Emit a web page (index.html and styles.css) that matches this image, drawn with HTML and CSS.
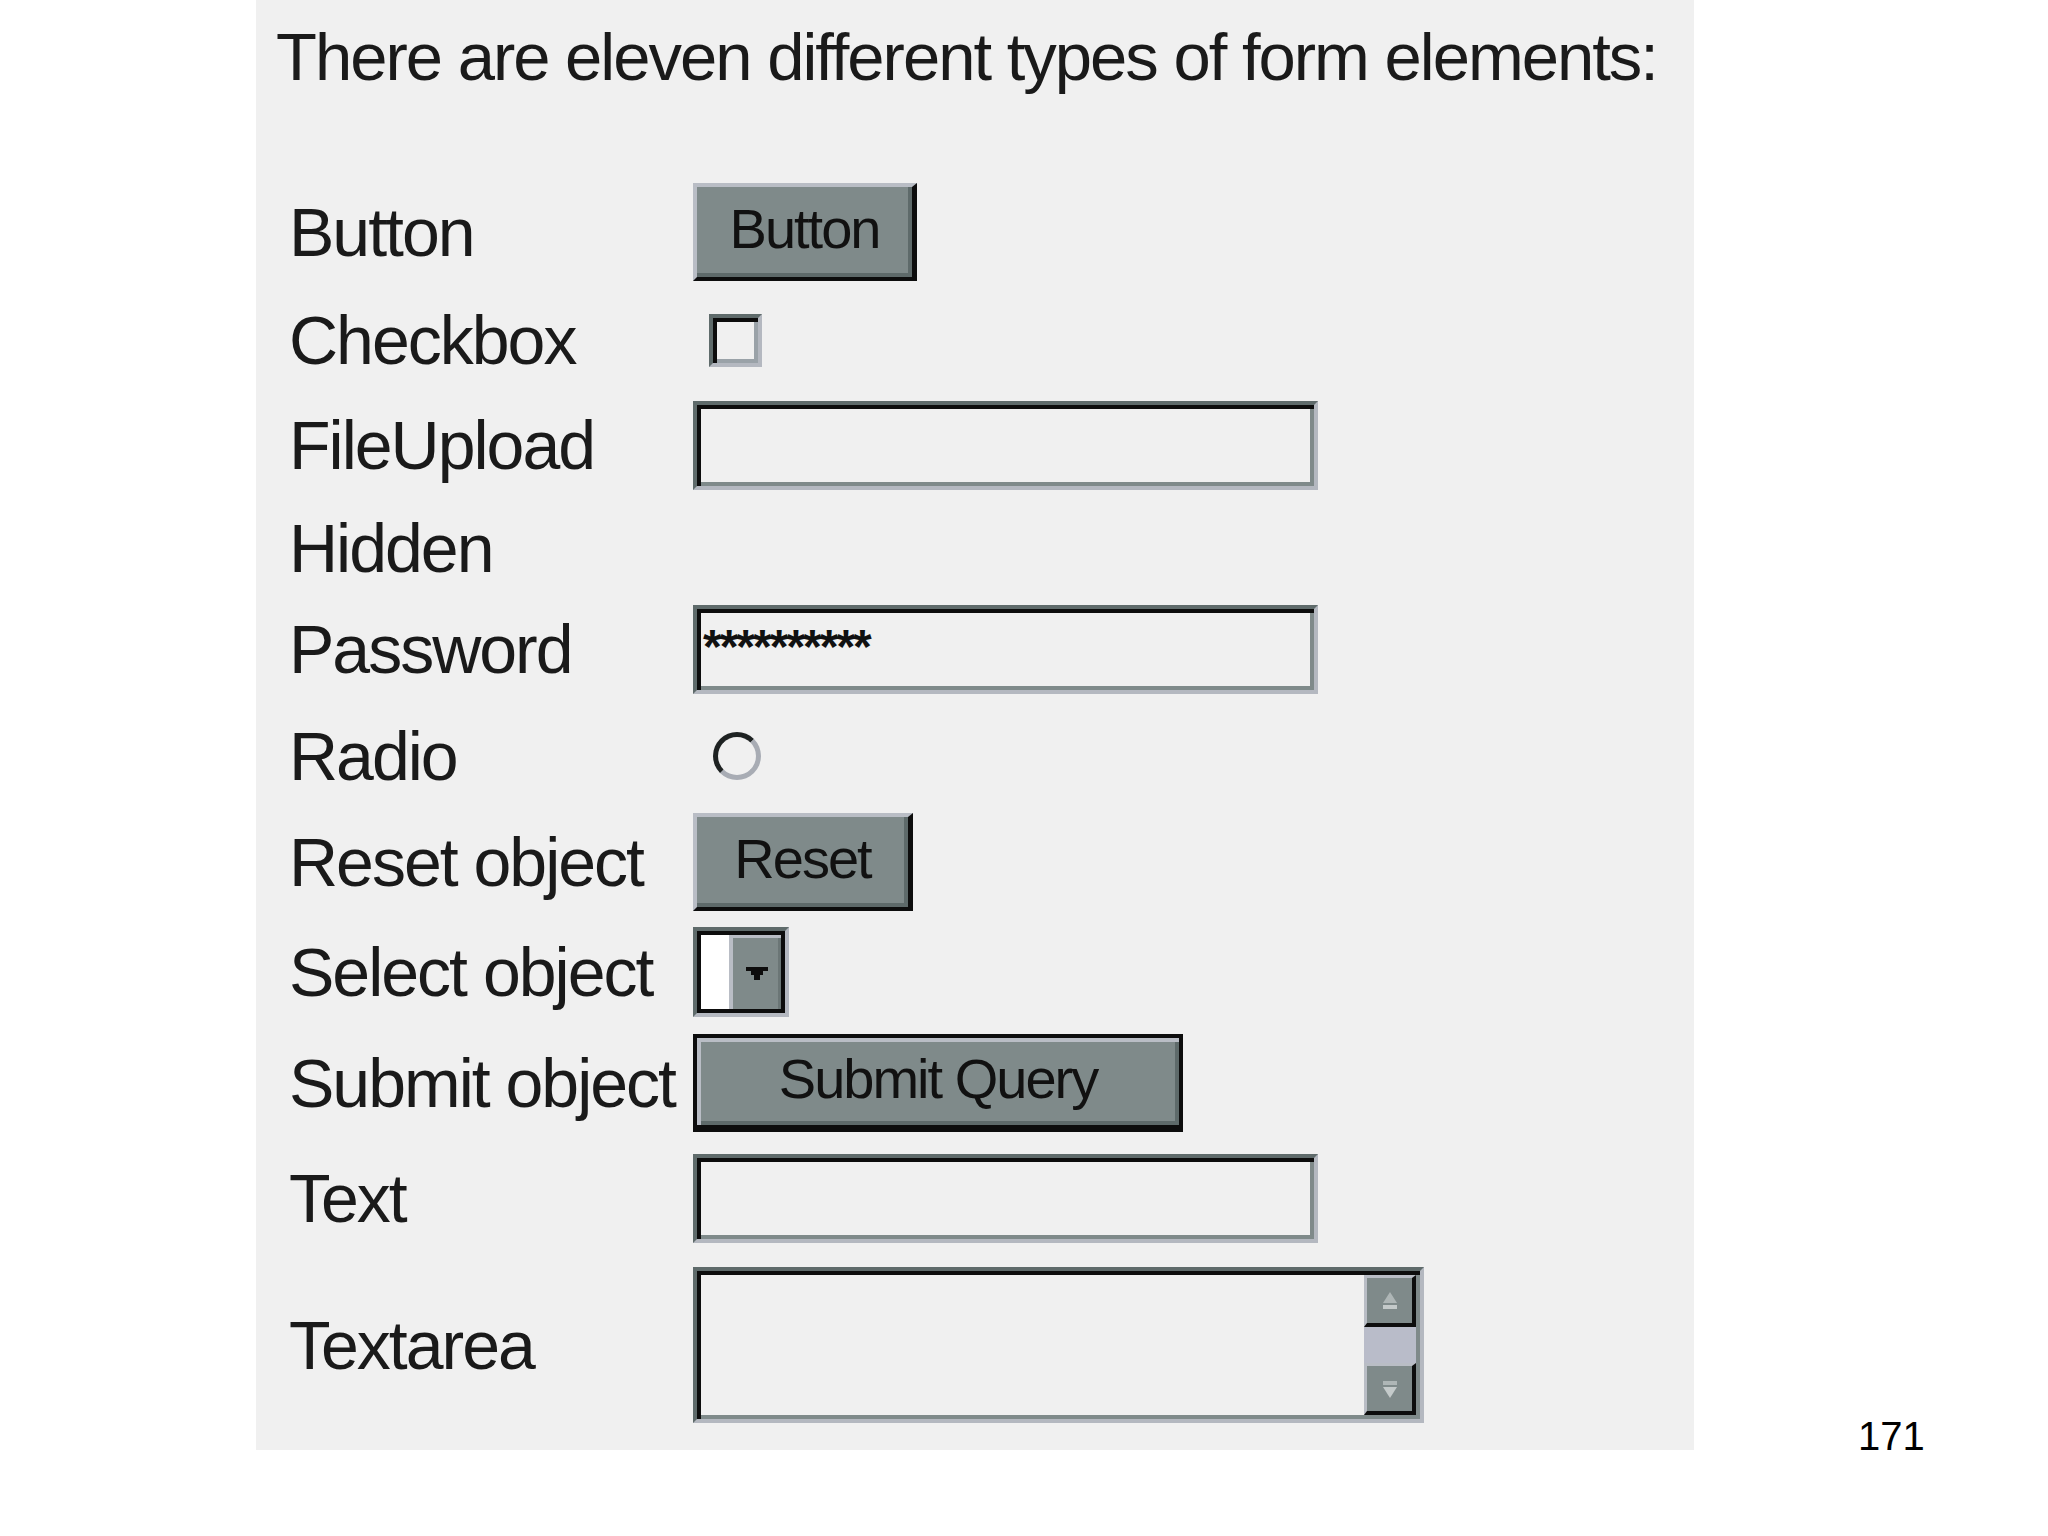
FILE: index.html
```html
<!DOCTYPE html>
<html lang="en">
<head>
<meta charset="utf-8">
<title>Form elements</title>
<link rel="stylesheet" href="styles.css">
</head>
<body>
<main class="slide">
  <section class="panel">
    <h1 class="heading">There are eleven different types of form elements:</h1>
    <div class="form">
      <span class="label">Button</span>
      <div class="btn btn-button">Button</div>

      <span class="label">Checkbox</span>
      <div class="checkbox"></div>

      <span class="label">FileUpload</span>
      <div class="field"></div>

      <span class="label">Hidden</span>
      <span class="empty"></span>

      <span class="label">Password</span>
      <div class="field field-password"><span class="stars">**********</span></div>

      <span class="label">Radio</span>
      <div class="radio"></div>

      <span class="label">Reset object</span>
      <div class="btn btn-reset">Reset</div>

      <span class="label">Select object</span>
      <div class="select">
        <div class="select-inner">
          <div class="select-value"></div>
          <div class="select-btn">
            <svg width="22" height="13" viewBox="0 0 22 13"><path d="M0 0H22V4H17V8H14V13H8V8H5V4H0Z" fill="#0d0d0d"/></svg>
          </div>
        </div>
      </div>

      <span class="label">Submit object</span>
      <div class="btn btn-submit">Submit Query</div>

      <span class="label">Text</span>
      <div class="field"></div>

      <span class="label">Textarea</span>
      <div class="textarea">
        <div class="scrollbar">
          <div class="scroll-btn">
            <svg width="20" height="18" viewBox="0 0 20 18"><path d="M10 0L17 11H3Z" fill="#aeb6b6"/><rect x="3" y="13" width="14" height="4" fill="#c4caca"/></svg>
          </div>
          <div class="scroll-track"></div>
          <div class="scroll-btn">
            <svg width="20" height="18" viewBox="0 0 20 18"><rect x="3" y="1" width="14" height="4" fill="#aeb6b6"/><path d="M3 7H17L10 18Z" fill="#c4caca"/></svg>
          </div>
        </div>
      </div>
    </div>
  </section>
  <div class="page-num">171</div>
</main>
</body>
</html>
```
FILE: styles.css
```css
* { box-sizing: border-box; }

body {
  margin: 0;
  background: #ffffff;
  font-family: "Liberation Sans", Arial, sans-serif;
  color: #111111;
}

.slide {
  display: flex;
  align-items: flex-end;
  padding-left: 256px;
}

.panel {
  width: 1438px;
  height: 1450px;
  background: #f0f0f0;
  padding: 23px 0 16px 20px;
}

.heading {
  margin: 0 0 80px;
  font-size: 67px;
  line-height: 67px;
  font-weight: normal;
  letter-spacing: -2px;
  white-space: nowrap;
  color: #1a1a1a;
}

.form {
  display: grid;
  grid-template-columns: 404px 1fr;
  grid-template-rows: 124px 92px 118px 88px 114px 100px 112px 108px 114px 116px 178px;
  align-items: center;
  justify-items: start;
  margin-left: 13px;
}

.label {
  font-size: 68px;
  line-height: 68px;
  letter-spacing: -2px;
  white-space: nowrap;
  color: #1a1a1a;
}

/* buttons */
.btn {
  display: flex;
  align-items: center;
  justify-content: center;
  height: 98px;
  padding-bottom: 6px;
  background: #7f8a8a;
  border-style: solid;
  border-width: 4px 5px 4px 4px;
  border-color: #b9bdc5 #0d0d0d #0d0d0d #b9bdc5;
  box-shadow: inset -4px -4px 0 #5e6a6a;
  font-size: 56px;
  line-height: 56px;
  letter-spacing: -2px;
  color: #111111;
  white-space: nowrap;
}

.btn-button { width: 224px; }
.btn-reset { width: 220px; }

.btn-submit {
  width: 490px;
  border: 4px solid #0d0d0d;
  border-bottom-width: 7px;
  box-shadow: inset 4px 4px 0 #b9bdc5, inset -4px -4px 0 #5e6a6a;
}

/* checkbox / radio */
.checkbox {
  width: 53px;
  height: 53px;
  margin-left: 16px;
  background: #f0f0f0;
  border: 4px solid;
  border-color: #5f6b6b #b4b8c0 #b4b8c0 #5f6b6b;
  box-shadow: inset 4px 4px 0 #0d0d0d, inset -4px -4px 0 #9aa2a8;
}

.radio {
  width: 48px;
  height: 48px;
  margin-left: 20px;
  border-radius: 50%;
  border: 5px solid;
  border-color: #1e2222 #a8acb4 #a8acb4 #1e2222;
  background: #f0f0f0;
}

/* text fields */
.field {
  width: 625px;
  height: 89px;
  background: #f0f0f0;
  border: 4px solid;
  border-color: #5f6b6b #b4b8c0 #b4b8c0 #5f6b6b;
  box-shadow: inset 4px 4px 0 #0d0d0d, inset -4px -4px 0 #7f8a8a;
}

.field-password {
  padding: 14px 0 0 6px;
}

.stars {
  display: block;
  font-size: 48px;
  line-height: 48px;
  font-weight: bold;
  letter-spacing: -2px;
  color: #111111;
}

/* select */
.select {
  width: 96px;
  height: 90px;
  border: 4px solid;
  border-color: #5f6b6b #b4b8c0 #b4b8c0 #5f6b6b;
}

.select-inner {
  display: flex;
  height: 100%;
  border: 4px solid #0d0d0d;
}

.select-value {
  width: 28px;
  background: #ffffff;
}

.select-btn {
  flex: 1;
  display: flex;
  align-items: center;
  justify-content: center;
  background: #7f8a8a;
  border-top: 3px solid #b9bdc5;
  border-left: 4px solid #b9bdc5;
  box-shadow: inset -3px 0 0 #6b7676;
}

/* textarea */
.textarea {
  width: 731px;
  height: 156px;
  padding: 4px;
  display: flex;
  justify-content: flex-end;
  background: #f0f0f0;
  border: 4px solid;
  border-color: #5f6b6b #b4b8c0 #b4b8c0 #5f6b6b;
  box-shadow: inset 4px 4px 0 #0d0d0d, inset -4px -4px 0 #7f8a8a;
}

.scrollbar {
  width: 52px;
  display: flex;
  flex-direction: column;
}

.scroll-btn {
  height: 52px;
  display: flex;
  align-items: center;
  justify-content: center;
  background: #7f8a8a;
  border-style: solid;
  border-width: 3px 4px 4px 3px;
  border-color: #b9bdc5 #0d0d0d #0d0d0d #b9bdc5;
}

.scroll-track {
  flex: 1;
  background: #b9bcc9;
}

/* page number */
.page-num {
  font-size: 40px;
  line-height: 40px;
  margin-left: 164px;
  margin-bottom: -6px;
  color: #000000;
}
```
